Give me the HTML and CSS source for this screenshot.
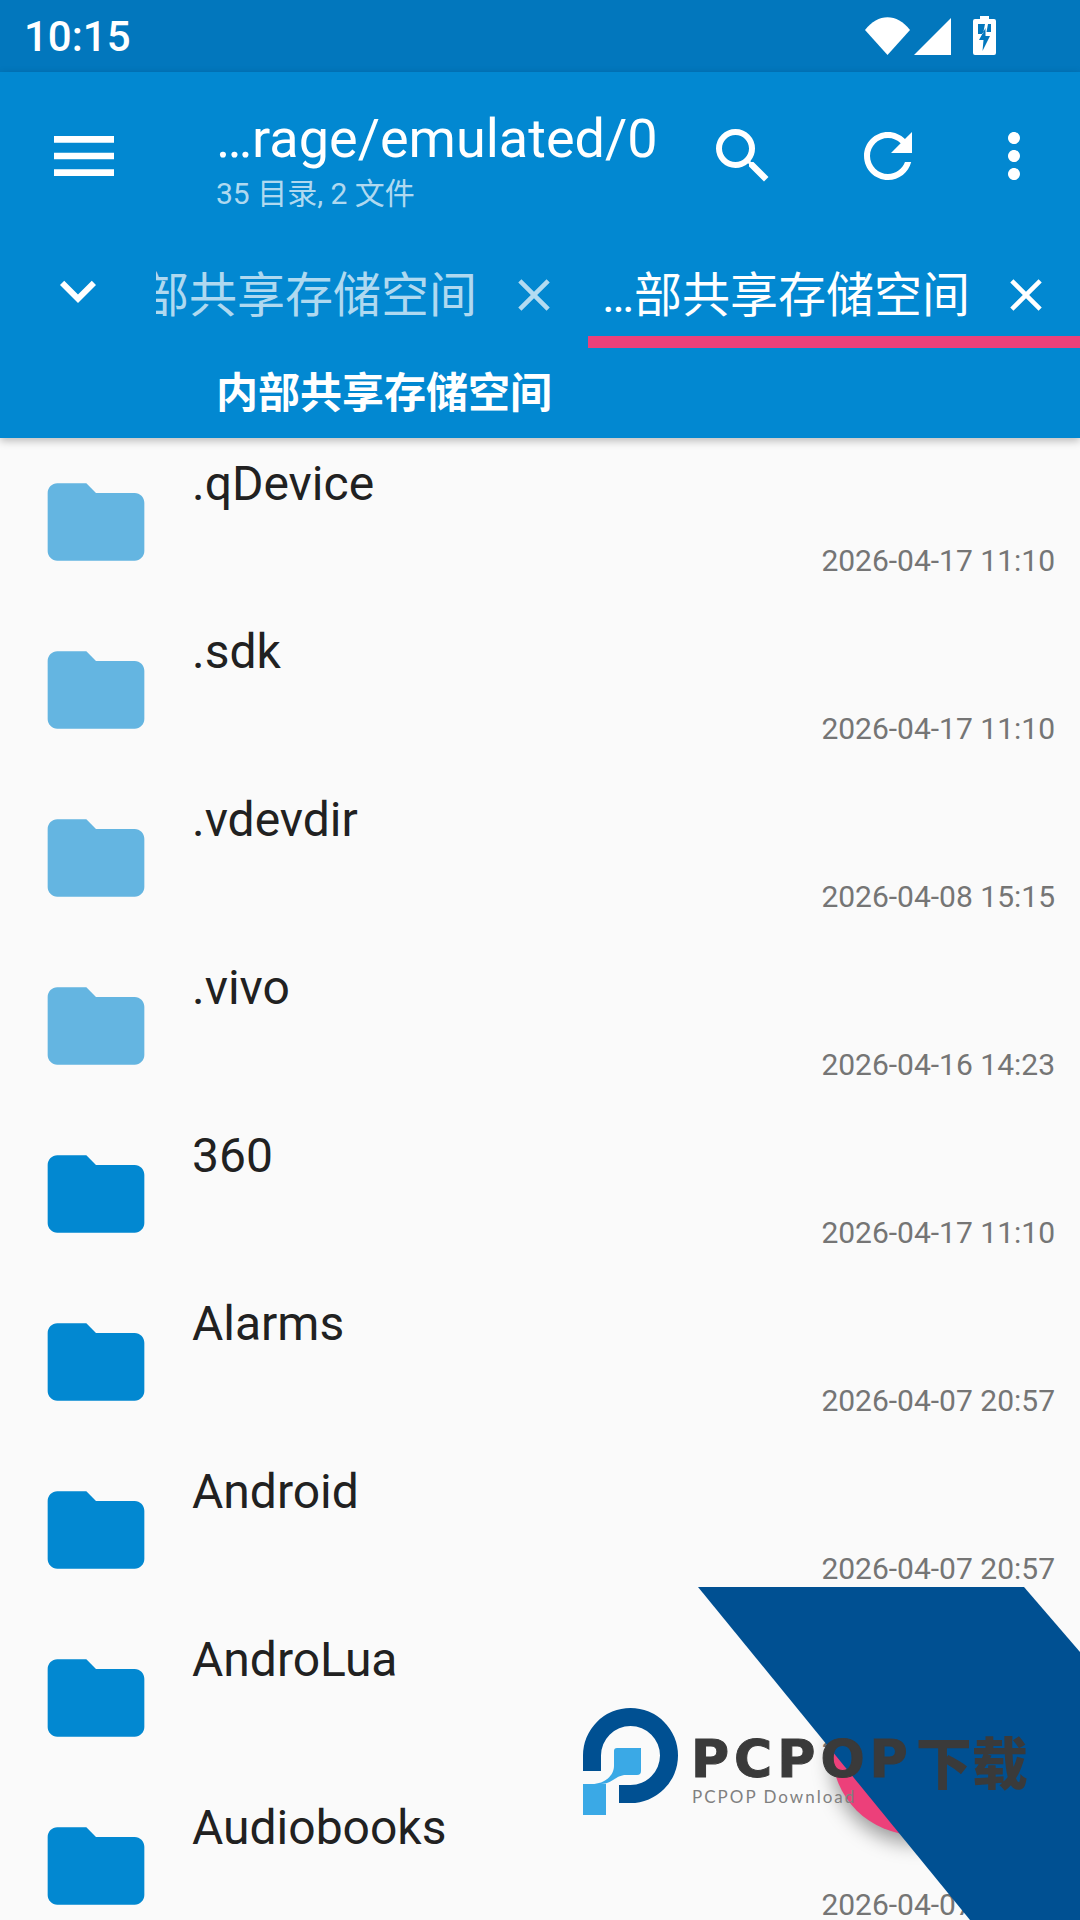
FILE: index.html
```html
<!DOCTYPE html>
<html lang="zh">
<head>
    <meta charset="UTF-8">
    <meta name="viewport" content="width=device-width, initial-scale=1.0">
    <title>File Manager</title>
    <link rel="stylesheet" href="styles.css">
</head>
<body>

    <!-- Status bar -->
    <div class="statusBar">
        <span class="clock">10:15</span>
        <div class="statusIcons">
            <svg class="wifiIcon" viewBox="0 0 45 38"><path d="M0 13 C13 -4 32 -4 45 13 L22.500 38 Z"/></svg>
            <svg class="signalIcon" viewBox="0 0 37 37"><path d="M0 37 L37 0 V37 Z"/></svg>
            <svg class="batteryIcon" viewBox="0 0 23 39"><path fill-rule="evenodd" d="M7 0h9v3h5a2 2 0 0 1 2 2v32a2 2 0 0 1-2 2H2a2 2 0 0 1-2-2V5a2 2 0 0 1 2-2h5z M5 8v10h5l2-10z M15 8l-1.500 8H18V8z M12.500 12 L6 24h4.500l-1 11 7.500-15h-4.500z"/></svg>
        </div>
    </div>

    <!-- Toolbar -->
    <div class="toolbar">
        <div class="topRow">
            <svg class="menuIcon" viewBox="0 0 24 24"><path d="M3 18h18v-2H3v2zm0-5h18v-2H3v2zm0-7v2h18V6H3z"/></svg>
            <div class="titleBlock">
                <div class="title">…rage/emulated/0</div>
                <div class="subtitle">35 目录, 2 文件</div>
            </div>
            <svg class="actionIcon searchIcon" viewBox="0 0 24 24"><path d="M15.500 14h-.79l-.28-.27A6.471 6.471 0 0 0 16 9.500 6.500 6.500 0 1 0 9.500 16c1.610 0 3.090-.59 4.230-1.570l.27.28v.79l5 4.990L20.490 19l-4.990-5zm-6 0C7.010 14 5 11.990 5 9.500S7.010 5 9.500 5 14 7.010 14 9.500 11.990 14 9.500 14z"/></svg>
            <svg class="actionIcon refreshIcon" viewBox="0 0 24 24"><path d="M17.650 6.350C16.200 4.900 14.210 4 12 4c-4.420 0-7.990 3.580-7.990 8s3.570 8 7.990 8c3.730 0 6.840-2.550 7.730-6h-2.080c-.82 2.330-3.040 4-5.650 4-3.310 0-6-2.690-6-6s2.690-6 6-6c1.660 0 3.140.69 4.220 1.780L13 11h7V4l-2.350 2.350z"/></svg>
            <svg class="actionIcon moreIcon" viewBox="0 0 24 24"><path d="M12 8c1.100 0 2-.9 2-2s-.9-2-2-2-2 .9-2 2 .9 2 2 2zm0 2c-1.100 0-2 .9-2 2s.9 2 2 2 2-.9 2-2-.9-2-2-2zm0 6c-1.100 0-2 .9-2 2s.9 2 2 2 2-.9 2-2-.9-2-2-2z"/></svg>
        </div>

        <div class="tabRow">
            <svg class="chevronIcon" viewBox="0 0 24 24"><path d="M16.590 8.590L12 13.170 7.410 8.590 6 10l6 6 6-6z"/></svg>
            <div class="tab tabInactive">
                <div class="tabText"><span>部共享存储空间</span></div>
                <svg class="closeIcon" viewBox="0 0 24 24"><path d="M19 6.410L17.590 5 12 10.590 6.410 5 5 6.410 10.590 12 5 17.590 6.410 19 12 13.410 17.590 19 19 17.590 13.410 12z"/></svg>
            </div>
            <div class="tab tabActive">
                <div class="tabText"><span>…部共享存储空间</span></div>
                <svg class="closeIcon" viewBox="0 0 24 24"><path d="M19 6.410L17.590 5 12 10.590 6.410 5 5 6.410 10.590 12 5 17.590 6.410 19 12 13.410 17.590 19 19 17.590 13.410 12z"/></svg>
            </div>
        </div>

        <div class="pathRow">内部共享存储空间</div>
    </div>

    <!-- File list -->
    <div class="fileList" id="fileList"></div>

    <!-- Floating button, mostly covered by the watermark -->
    <div class="fab"></div>

    <!-- Watermark -->
    <div class="watermark">
        <svg class="watermarkArt" viewBox="570 1587 510 333">
            <polygon class="banner" points="698,1587 1024,1587 1080,1652 1080,1920 970,1920"/>
            <path class="logoRing" d="M583 1771 V1755.500 A47.500 47.500 0 1 1 630.500 1803 H619 V1785 H630.500 A29.500 29.500 0 1 0 601 1755.500 V1771 Z"/>
            <path class="logoDrop" d="M617 1748 H641 V1771 Q641 1775 637 1775 H626 C616 1775 612 1784 601 1784 H606 V1815 H583 V1784 H592 C604 1784 614 1776 614 1766 V1751 Q614 1748 617 1748 Z"/>
        </svg>
        <div class="brand"><span class="brandLatin">PCPOP</span><span class="brandCjk">下载</span></div>
        <div class="brandSub">PCPOP Download</div>
    </div>

    <script>
        let files = [
            { name: ".qDevice", date: "2026-04-17 11:10", hidden: true },
            { name: ".sdk", date: "2026-04-17 11:10", hidden: true },
            { name: ".vdevdir", date: "2026-04-08 15:15", hidden: true },
            { name: ".vivo", date: "2026-04-16 14:23", hidden: true },
            { name: "360", date: "2026-04-17 11:10" },
            { name: "Alarms", date: "2026-04-07 20:57" },
            { name: "Android", date: "2026-04-07 20:57" },
            { name: "AndroLua", date: "2026-04-07 20:57" },
            { name: "Audiobooks", date: "2026-04-07 20:57" }
        ];

        let folderPath = "M10 4H4c-1.100 0-2 .9-2 2v12c0 1.100.9 2 2 2h16c1.100 0 2-.9 2-2V8c0-1.100-.9-2-2-2h-8l-2-2z";
        let html = "";
        files.forEach(file => {
            html += '<div class="fileRow' + (file.hidden ? ' hiddenFile' : '') + '">'
                + '<svg class="folderIcon" viewBox="0 0 24 24"><path d="' + folderPath + '"/></svg>'
                + '<div class="fileInfo"><div class="fileName">' + file.name + '</div>'
                + '<div class="fileDate">' + file.date + '</div></div></div>';
        });
        document.getElementById("fileList").innerHTML = html;
    </script>

</body>
</html>
```

FILE: styles.css
```css
html, body {
    margin: 0;
    height: 1920px;
    overflow: hidden;
}
body {
    position: relative;
    font-family: Roboto, "Noto Sans CJK SC", sans-serif;
    background-color: #fafafa;
    color: #212121;
}
svg {
    display: block;
    flex: none;
    fill: white;
}

/* status bar */
.statusBar {
    height: 72px;
    display: flex;
    align-items: center;
    justify-content: space-between;
    background-color: #0277bd;
    color: white;
}
.clock {
    margin-left: 24px;
    font-size: 42px;
    font-weight: 500;
}
.statusIcons {
    display: flex;
    align-items: flex-end;
    height: 39px;
    margin-right: 84px;
    margin-bottom: 2px;
}
.wifiIcon {
    width: 45px;
    height: 38px;
}
.signalIcon {
    width: 37px;
    height: 37px;
    margin-left: 4px;
}
.batteryIcon {
    width: 23px;
    height: 39px;
    margin-left: 22px;
}

/* toolbar */
.toolbar {
    height: 366px;
    background-color: #0288d1;
    color: white;
    box-shadow: 0 3px 8px rgba(0, 0, 0, 0.25);
    position: relative;
}
.topRow {
    height: 184px;
    box-sizing: border-box;
    padding: 37px 0 0 44px;
    display: flex;
    align-items: flex-start;
}
.menuIcon {
    width: 80px;
    height: 80px;
    margin-top: 7px;
}
.titleBlock {
    width: 490px;
    margin-left: 92px;
    margin-right: 1px;
}
.title {
    font-size: 54px;
    line-height: 60px;
    white-space: nowrap;
}
.subtitle {
    margin-top: 7px;
    font-size: 30px;
    line-height: 36px;
    color: rgba(255, 255, 255, 0.7);
}
.actionIcon {
    width: 72px;
    height: 72px;
    margin-top: 11px;
}
.refreshIcon {
    margin-left: 73px;
}
.moreIcon {
    margin-left: 54px;
}

.tabRow {
    height: 92px;
    display: flex;
}
.chevronIcon {
    width: 72px;
    height: 72px;
    margin-left: 42px;
    margin-right: 42px;
    margin-top: -1px;
}
.tab {
    display: flex;
    box-sizing: border-box;
    height: 92px;
    padding-bottom: 12px;
    align-items: center;
    font-size: 48px;
}
.tabText {
    flex: 1;
    min-width: 0;
    display: flex;
    justify-content: flex-end;
    margin-bottom: 10px;
    overflow: hidden;
    white-space: nowrap;
}
.tabText span {
    flex: none;
}
.closeIcon {
    width: 54px;
    height: 54px;
    margin-bottom: 2px;
}
.tabInactive {
    width: 432px;
    padding-right: 27px;
    color: rgba(255, 255, 255, 0.7);
}
.tabInactive .tabText {
    margin-right: 30px;
}
.tabInactive .closeIcon {
    opacity: 0.7;
}
.tabActive {
    width: 492px;
    padding: 0 27px 0 14px;
    border-bottom: 12px solid #ec407a;
}
.tabActive .tabText {
    justify-content: flex-start;
}
.pathRow {
    height: 90px;
    line-height: 92px;
    padding-left: 216px;
    font-size: 42px;
    font-weight: 700;
}

/* file list */
.fileList {
    height: 1482px;
    overflow: hidden;
}
.fileRow {
    height: 168px;
    display: flex;
    align-items: center;
}
.folderIcon {
    width: 116px;
    height: 116px;
    margin-left: 38px;
    fill: #0288d1;
}
.hiddenFile .folderIcon {
    opacity: 0.6;
}
.fileInfo {
    flex: 1;
    align-self: flex-start;
    margin-left: 38px;
    padding: 16px 25px 0 0;
}
.fileName {
    font-size: 48px;
    line-height: 60px;
}
.fileDate {
    margin-top: 27px;
    font-size: 30px;
    line-height: 40px;
    text-align: right;
    color: #757575;
}

/* fab under the watermark */
.fab {
    position: absolute;
    left: 832px;
    top: 1667px;
    width: 168px;
    height: 168px;
    border-radius: 50%;
    background-color: #ec407a;
    box-shadow: 0 8px 20px rgba(0, 0, 0, 0.4);
}

/* watermark */
.watermark {
    position: absolute;
    left: 570px;
    top: 1587px;
    width: 510px;
    height: 333px;
}
.watermarkArt {
    width: 510px;
    height: 333px;
}
.banner {
    fill: #005092;
}
.logoRing {
    fill: #005092;
}
.logoDrop {
    fill: #3aa9e6;
}
.brand {
    position: absolute;
    left: 121px;
    top: 142px;
    display: flex;
    align-items: center;
    height: 60px;
    color: #3a3a3a;
    font-weight: 700;
}
.brandLatin {
    font-family: "DejaVu Sans", sans-serif;
    font-size: 52px;
    letter-spacing: 5px;
    -webkit-text-stroke: 1px #3a3a3a;
}
.brandCjk {
    font-family: "Noto Sans CJK SC", sans-serif;
    font-size: 56px;
    font-weight: 900;
    margin-left: 3px;
}
.brandSub {
    position: absolute;
    left: 122px;
    top: 200px;
    font-family: Lato, sans-serif;
    font-size: 17px;
    line-height: 20px;
    letter-spacing: 2px;
    white-space: nowrap;
    color: #808080;
}
```
